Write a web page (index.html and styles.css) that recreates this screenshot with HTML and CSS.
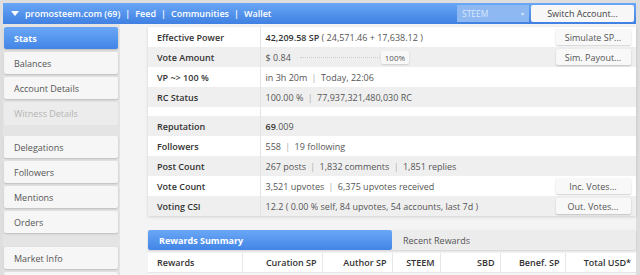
FILE: index.html
```html
<!DOCTYPE html>
<html lang="en">
<head>
  <meta charset="UTF-8" />
  <title>SteemWorld - promosteem.com</title>
  <link rel="stylesheet" href="styles.css">
</head>
<body>

  <div class="topbar">
    <div class="nav">
      <span class="caret"></span>
      <a href="#">promosteem.com (69)</a>
      <span class="nav-sep">|</span>
      <a href="#">Feed</a>
      <span class="nav-sep">|</span>
      <a href="#">Communities</a>
      <span class="nav-sep">|</span>
      <a href="#">Wallet</a>
    </div>
    <div class="topbar-right">
      <div class="chain-select">STEEM <span class="arrow">&#9662;</span></div>
      <button class="switch-btn">Switch Account...</button>
    </div>
  </div>

  <div class="layout">

    <div class="sidebar">
      <a href="#" class="side-btn active">Stats</a>
      <a href="#" class="side-btn">Balances</a>
      <a href="#" class="side-btn">Account Details</a>
      <a href="#" class="side-btn disabled">Witness Details</a>
      <div class="side-gap"></div>
      <a href="#" class="side-btn">Delegations</a>
      <a href="#" class="side-btn">Followers</a>
      <a href="#" class="side-btn">Mentions</a>
      <a href="#" class="side-btn">Orders</a>
      <div class="side-gap wide"></div>
      <a href="#" class="side-btn">Market Info</a>
      <a href="#" class="side-btn"></a>
    </div>

    <div class="main">

      <table class="stats">
        <tr>
          <td class="label">Effective Power</td>
          <td class="value"><b>42,209.58 SP</b> ( 24,571.46 + 17,638.12 )</td>
          <td class="action"><button class="small-btn">Simulate SP...</button></td>
        </tr>
        <tr>
          <td class="label">Vote Amount</td>
          <td class="value">
            <div class="vote-amount">
              <span>$ 0.84</span>
              <span class="slider"></span>
              <span class="pct">100%</span>
            </div>
          </td>
          <td class="action"><button class="small-btn">Sim. Payout...</button></td>
        </tr>
        <tr>
          <td class="label">VP ~&gt; 100 %</td>
          <td class="value">in 3h 20m <span class="sep">|</span> Today, 22:06</td>
          <td class="action"></td>
        </tr>
        <tr>
          <td class="label">RC Status</td>
          <td class="value">100.00 % <span class="sep">|</span> 77,937,321,480,030 RC</td>
          <td class="action"></td>
        </tr>
        <tr class="spacer">
          <td class="label"></td>
          <td class="value"></td>
          <td class="action"></td>
        </tr>
        <tr>
          <td class="label">Reputation</td>
          <td class="value"><b>69</b>.009</td>
          <td class="action"></td>
        </tr>
        <tr>
          <td class="label">Followers</td>
          <td class="value">558 <span class="sep">|</span> 19 following</td>
          <td class="action"></td>
        </tr>
        <tr>
          <td class="label">Post Count</td>
          <td class="value">267 posts <span class="sep">|</span> 1,832 comments <span class="sep">|</span> 1,851 replies</td>
          <td class="action"></td>
        </tr>
        <tr>
          <td class="label">Vote Count</td>
          <td class="value">3,521 upvotes <span class="sep">|</span> 6,375 upvotes received</td>
          <td class="action"><button class="small-btn">Inc. Votes...</button></td>
        </tr>
        <tr>
          <td class="label">Voting CSI</td>
          <td class="value">12.2 ( 0.00 % self, 84 upvotes, 54 accounts, last 7d )</td>
          <td class="action"><button class="small-btn">Out. Votes...</button></td>
        </tr>
      </table>

      <div class="tabs">
        <div class="tab active">Rewards Summary</div>
        <div class="tab">Recent Rewards</div>
      </div>

      <table class="rewards">
        <tr>
          <th class="first">Rewards</th>
          <th class="c-cur">Curation SP</th>
          <th class="c-auth">Author SP</th>
          <th class="c-steem">STEEM</th>
          <th class="c-sbd">SBD</th>
          <th class="c-benef">Benef. SP</th>
          <th>Total USD*</th>
        </tr>
      </table>

    </div>

  </div>

</body>
</html>
```

FILE: styles.css
```css
* {
  margin: 0;
  padding: 0;
  box-sizing: border-box;
}

body {
  font-family: 'Open Sans', sans-serif;
  font-size: 9px;
  background-color: #dedede;
  color: #555;
  padding: 3px 4px 0 3px;
  overflow: hidden;
}

a {
  text-decoration: none;
}

/* top bar */

.topbar {
  height: 21px;
  background: linear-gradient(#6aa7f6, #3f80e2);
  display: flex;
  justify-content: space-between;
  align-items: center;
  padding-right: 2px;
}

.nav {
  display: flex;
  align-items: center;
  padding-left: 8px;
  color: #fff;
  font-weight: 600;
  font-size: 9px;
}

.nav a {
  color: #fff;
}

.nav-sep {
  margin: 0 5px;
}

.caret {
  width: 0;
  height: 0;
  border-left: 4px solid transparent;
  border-right: 4px solid transparent;
  border-top: 5px solid #fff;
  margin-right: 6px;
}

.topbar-right {
  display: flex;
  align-items: center;
  gap: 2px;
}

.chain-select {
  width: 72px;
  height: 17px;
  background-color: #8db8f2;
  color: #dbe8fa;
  font-size: 8.5px;
  display: flex;
  justify-content: space-between;
  align-items: center;
  padding: 0 5px;
}

.chain-select .arrow {
  font-size: 6px;
}

.switch-btn {
  width: 103px;
  height: 17px;
  border: none;
  background-color: #f7f7f7;
  color: #444;
  font-family: inherit;
  font-size: 9px;
  border-radius: 2px;
}

/* layout */

.layout {
  display: flex;
  height: 260px;
}

.sidebar {
  width: 117px;
  background-color: #e4e4e4;
  padding: 3px 2px 0 1px;
  display: flex;
  flex-direction: column;
  gap: 3px;
}

.side-btn {
  height: 22px;
  flex-shrink: 0;
  display: flex;
  align-items: center;
  padding-left: 10px;
  background-color: #f6f6f6;
  color: #555;
  border-radius: 2px;
  box-shadow: 0 1px 2px rgba(0, 0, 0, 0.18);
}

.side-btn.active {
  background: linear-gradient(#6aa7f6, #4285e6);
  color: #fff;
  font-weight: 700;
}

.side-btn.disabled {
  background-color: #ececec;
  color: #b4b4b4;
  box-shadow: none;
  height: 23px;
}

.side-gap {
  height: 5px;
  flex-shrink: 0;
}

.side-gap.wide {
  height: 8px;
}

.main {
  flex: 1;
  background-color: #f4f4f4;
  padding: 3px 0 0 28px;
}

/* stats table */

.stats {
  width: 100%;
  border-collapse: collapse;
  background-color: #fff;
  box-shadow: 0 1px 3px rgba(0, 0, 0, 0.15);
}

.stats td {
  height: 20px;
  padding: 0 5px;
  white-space: nowrap;
}

.stats tr:nth-child(even) td {
  background-color: #efefef;
}

.stats tr.spacer td {
  height: 9px;
}

.stats .label {
  width: 112px;
  padding-left: 9px;
  color: #333;
  font-weight: 600;
  border-right: 1px solid #e4e4e4;
}

.stats .value b {
  color: #333;
  font-weight: 600;
}

.stats .action {
  text-align: right;
  width: 84px;
  padding-right: 5px;
}

.sep {
  color: #aaa;
  margin: 0 2px;
}

.small-btn {
  width: 75px;
  height: 16px;
  border: none;
  border-radius: 2px;
  background-color: #f8f8f8;
  color: #555;
  font-family: inherit;
  font-size: 9px;
  box-shadow: 0 1px 2px rgba(0, 0, 0, 0.2);
}

.vote-amount {
  display: flex;
  align-items: center;
}

.slider {
  width: 80px;
  border-top: 1px dotted #ccc;
  margin: 0 1px 0 9px;
}

.pct {
  background-color: #f8f8f8;
  border-radius: 2px;
  box-shadow: 0 1px 2px rgba(0, 0, 0, 0.15);
  padding: 1px 4px;
  font-size: 8px;
}

/* tabs */

.tabs {
  display: flex;
  margin-top: 14px;
  background-color: #ececec;
  box-shadow: 0 1px 2px rgba(0, 0, 0, 0.15);
}

.tab {
  flex: 1;
  height: 20px;
  display: flex;
  align-items: center;
  padding-left: 11px;
  color: #555;
}

.tab.active {
  background: linear-gradient(#6aa7f6, #4285e6);
  color: #fff;
  font-weight: 700;
  border-radius: 2px;
}

/* rewards table */

.rewards {
  width: 100%;
  margin-top: 3px;
  border-collapse: collapse;
  background-color: #fff;
  table-layout: fixed;
}

.rewards th {
  height: 19px;
  padding: 0 5px;
  text-align: right;
  color: #333;
  font-weight: 600;
  border-left: 1px solid #e6e6e6;
  border-bottom: 1px solid #e6e6e6;
  white-space: nowrap;
}

.rewards th.first {
  text-align: left;
  border-left: none;
  padding-left: 9px;
  width: 94px;
}

.rewards .c-cur {
  width: 80px;
}

.rewards .c-auth {
  width: 70px;
}

.rewards .c-steem {
  width: 48px;
}

.rewards .c-sbd {
  width: 60px;
}

.rewards .c-benef {
  width: 65px;
}
```
